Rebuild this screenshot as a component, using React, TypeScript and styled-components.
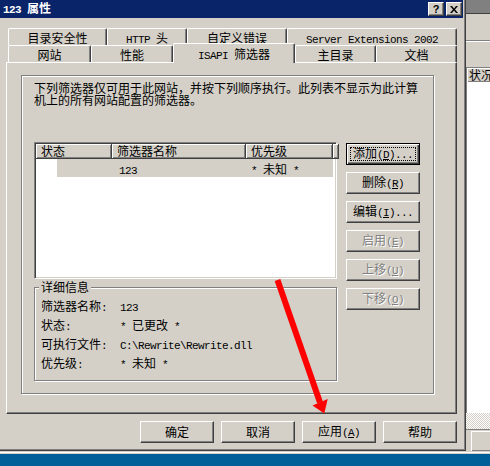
import React from 'react';
import styled, { createGlobalStyle, css } from 'styled-components';

const FACE = '#d4d0c8';
const SHADOW = '#808080';
const DARK = '#404040';

const GlobalStyle = createGlobalStyle`
  html, body {
    margin: 0;
    padding: 0;
    background: ${FACE};
  }
  body {
    font-family: "Noto Sans CJK SC", "Liberation Sans", sans-serif;
    font-size: 12px;
    color: #000;
  }
  * { box-sizing: border-box; }
`;

// latin runs: SimSun draws them 6px wide, mono
const Lat = styled.span`
  font-family: "Liberation Mono", monospace;
  font-size: 11px;
  letter-spacing: -0.6px;
  white-space: pre;
`;

const CJK = /([\u2e80-\u9fff\u3000-\u303f\uff00-\uffef]+)/;

const mix = (text: string) => (
  <span>
    {text
      .split(CJK)
      .filter(Boolean)
      .map((part, i) => (CJK.test(part) ? <span key={i}>{part}</span> : <Lat key={i}>{part}</Lat>))}
  </span>
);

const Screen = styled.div`
  position: relative;
  width: 490px;
  height: 466px;
  overflow: hidden;
  display: flex;
  flex-direction: column;
`;

const Desktop = styled.div`
  display: flex;
  height: 451px;
`;

const Dialog = styled.div`
  width: 469px;
  height: 451px;
  display: flex;
  flex-direction: column;
  background: ${FACE};
  padding-right: 2px;
  border-right: 1px solid ${DARK};
  border-bottom: 1px solid ${DARK};
  box-shadow: inset -1px -1px ${SHADOW};
`;

const TitleBar = styled.div`
  height: 18px;
  flex: none;
  display: flex;
  align-items: center;
  padding: 0 1px 0 3px;
  background: #0a246a;
  color: #fff;
  font-weight: bold;
`;

const TitleText = styled.div`
  flex: 1;
  line-height: 18px;
`;

const CapButtons = styled.div`
  display: flex;
  gap: 2px;
`;

const CapButton = styled.div`
  width: 16px;
  height: 14px;
  display: flex;
  align-items: center;
  justify-content: center;
  background: ${FACE};
  border: 1px solid;
  border-color: #fff ${DARK} ${DARK} #fff;
  box-shadow: inset -1px -1px ${SHADOW};
  color: #000;
  font-family: "Liberation Sans", sans-serif;
  font-size: 11px;
  font-weight: bold;
  line-height: 12px;
`;

const Body = styled.div`
  padding: 10px 6px 0 6px;
  display: flex;
  flex-direction: column;
`;

const TabRows = styled.div`
  padding-left: 2px;
  display: flex;
  flex-direction: column;
`;

const TabRow = styled.div`
  display: flex;
  height: 17px;
  align-items: flex-end;
`;

const Tab = styled.div<{ $w: number; $active?: boolean }>`
  width: ${p => p.$w}px;
  height: 17px;
  flex: none;
  display: flex;
  align-items: center;
  justify-content: center;
  padding-top: 1px;
  background: ${FACE};
  border-top: 1px solid #fff;
  border-left: 1px solid #fff;
  border-right: 1px solid ${DARK};
  border-top-left-radius: 2px;
  border-top-right-radius: 2px;
  box-shadow: inset -1px 0 ${SHADOW};
  white-space: nowrap;
  ${p =>
    p.$active &&
    css`
      height: 20px;
      margin-bottom: -1px;
      position: relative;
      z-index: 1;
      padding-top: 0;
    `}
`;

const Panel = styled.div`
  height: 352px;
  background: ${FACE};
  border-top: 1px solid #fff;
  border-left: 1px solid #fff;
  border-right: 1px solid ${DARK};
  border-bottom: 1px solid ${DARK};
  box-shadow: inset -1px -1px ${SHADOW};
  padding: 12px 0 0 14px;
`;

const Frame = styled.div`
  width: 413px;
  height: 319px;
  border: 1px solid ${SHADOW};
  box-shadow: inset 1px 1px #fff, 1px 1px #fff;
  padding: 6px 0 0 12px;
`;

const Description = styled.div`
  width: 390px;
  line-height: 12px;
`;

const Main = styled.div`
  margin-top: 36px;
  display: flex;
  gap: 9px;
`;

const LeftCol = styled.div`
  width: 303px;
  display: flex;
  flex-direction: column;
`;

const ListView = styled.div`
  height: 137px;
  background: #fff;
  border: 1px solid;
  border-color: ${SHADOW} #fff #fff ${SHADOW};
  box-shadow: inset 1px 1px ${DARK}, inset -1px -1px ${FACE};
  padding: 1px;
`;

const HeaderRow = styled.div`
  display: flex;
  height: 15px;
`;

const HeaderCell = styled.div<{ $w?: number }>`
  ${p => (p.$w ? `width: ${p.$w}px; flex: none;` : 'flex: 1;')}
  height: 15px;
  padding-left: 5px;
  line-height: 14px;
  background: ${FACE};
  border-right: 1px solid ${DARK};
  border-bottom: 1px solid ${DARK};
  box-shadow: inset 1px 1px #fff, inset -1px -1px ${SHADOW};
  white-space: nowrap;
`;

const ItemRow = styled.div`
  display: flex;
  height: 18px;
`;

const ItemIcon = styled.div`
  width: 21px;
  flex: none;
`;

const ItemSelection = styled.div`
  display: flex;
  background: ${FACE};
`;

const ItemCell = styled.div<{ $w: number; $pad?: number }>`
  width: ${p => p.$w}px;
  padding-left: ${p => p.$pad ?? 0}px;
  line-height: 16px;
  padding-top: 2px;
  white-space: nowrap;
`;

const Group = styled.div`
  margin-top: 8px;
  height: 94px;
  border: 1px solid ${SHADOW};
  box-shadow: inset 1px 1px #fff, 1px 1px #fff;
  padding-left: 6px;
`;

const Legend = styled.div`
  width: fit-content;
  margin: -7px 0 0 -2px;
  padding: 0 2px;
  background: ${FACE};
  line-height: 12px;
`;

const Details = styled.div`
  margin-top: 3px;
  display: grid;
  grid-template-columns: 79px auto;
  grid-auto-rows: 19px;
  align-items: center;
  white-space: nowrap;
`;

const ButtonCol = styled.div`
  margin-top: 1px;
  display: flex;
  flex-direction: column;
  gap: 7px;
`;

const Btn = styled.div<{ $default?: boolean; $disabled?: boolean }>`
  width: 74px;
  height: 22px;
  flex: none;
  display: flex;
  align-items: center;
  justify-content: center;
  background: ${FACE};
  border: 1px solid;
  border-color: #fff ${DARK} ${DARK} #fff;
  box-shadow: inset -1px -1px ${SHADOW};
  line-height: 18px;
  white-space: nowrap;
  ${p =>
    p.$default &&
    css`
      border-color: #000;
      box-shadow: inset 1px 1px #fff, inset -1px -1px ${DARK}, inset -2px -2px ${SHADOW};
      outline: 1px dotted #000;
      outline-offset: -5px;
    `}
  ${p =>
    p.$disabled &&
    css`
      color: ${SHADOW};
      text-shadow: 1px 1px 0 #fff;
    `}
`;

const Footer = styled.div`
  margin-top: 7px;
  display: flex;
  justify-content: flex-end;
  gap: 7px;
`;

const BackWin = styled.div`
  flex: 1;
  display: flex;
  flex-direction: column;
  background: ${FACE};
`;

const BackCaption = styled.div`
  height: 14px;
  background: ${SHADOW};
  border-bottom: 1px solid ${DARK};
`;

const BackToolbar = styled.div`
  height: 28px;
  border-bottom: 1px solid #fff;
  box-shadow: inset 0 -1px ${SHADOW};
`;

const BackPane = styled.div`
  flex: 1;
  margin-top: 25px;
  display: flex;
  flex-direction: column;
  background: #fff;
  border-top: 1px solid ${SHADOW};
  border-left: 1px solid ${SHADOW};
`;

const BackHeader = styled.div`
  height: 14px;
  padding-left: 2px;
  line-height: 13px;
  background: ${FACE};
  box-shadow: inset 1px 1px #fff, inset 0 -1px ${SHADOW};
  white-space: nowrap;
  overflow: hidden;
`;

const Dither = styled.div`
  height: 16px;
  background: repeating-conic-gradient(${FACE} 0 25%, #fff 0 50%) 0 0 / 2px 2px;
`;

const BackBottom = styled.div`
  height: 22px;
  border-top: 1px solid ${SHADOW};
  padding: 1px 0 0 5px;
`;

const BackBtn = styled.div`
  height: 20px;
  border-top: 1px solid #fff;
  border-left: 1px solid #fff;
  box-shadow: inset 0 -1px ${SHADOW};
`;

const Taskbar = styled.div`
  flex: 1;
  background: #005e98;
  border-top: 1px solid ${FACE};
  box-shadow: inset 0 1px #fff, inset 0 2px ${FACE};
`;

const Overlay = styled.svg`
  position: absolute;
  left: 0;
  top: 0;
  pointer-events: none;
`;

const row1 = [
  { label: '目录安全性', w: 99 },
  { label: 'HTTP 头', w: 80 },
  { label: '自定义错误', w: 100 },
  { label: 'Server Extensions 2002', w: 170 },
];

const row2 = [
  { label: '网站', w: 83 },
  { label: '性能', w: 82 },
  { label: 'ISAPI 筛选器', w: 122, active: true },
  { label: '主目录', w: 81 },
  { label: '文档', w: 81 },
];

const sideButtons = [
  { text: '添加', key: 'D', tail: '...', def: true },
  { text: '删除', key: 'R' },
  { text: '编辑', key: 'I', tail: '...' },
  { text: '启用', key: 'E', off: true },
  { text: '上移', key: 'U', off: true },
  { text: '下移', key: 'O', off: true },
];

const details = [
  ['筛选器名称:', '123'],
  ['状态:', '* 已更改 *'],
  ['可执行文件:', 'C:\\Rewrite\\Rewrite.dll'],
  ['优先级:', '* 未知 *'],
];

const Label = ({ text, hot, tail }: { text: string; hot?: string; tail?: string }) => (
  <span>
    {text}
    {hot && (
      <Lat>
        (<u>{hot}</u>){tail}
      </Lat>
    )}
  </span>
);

export default function App() {
  return (
    <>
      <GlobalStyle />
      <Screen>
        <Desktop>
          <Dialog>
            <TitleBar>
              <TitleText>{mix('123 属性')}</TitleText>
              <CapButtons>
                <CapButton>?</CapButton>
                <CapButton>
                  <svg width="8" height="7" viewBox="0 0 8 7">
                    <path d="M0 0h2l2 2.4 2-2.4h2l-3 3.5 3 3.5h-2l-2-2.4-2 2.4h-2l3-3.5z" fill="#000" />
                  </svg>
                </CapButton>
              </CapButtons>
            </TitleBar>
            <Body>
              <TabRows>
                <TabRow>
                  {row1.map(t => (
                    <Tab key={t.label} $w={t.w}>
                      {mix(t.label)}
                    </Tab>
                  ))}
                </TabRow>
                <TabRow>
                  {row2.map(t => (
                    <Tab key={t.label} $w={t.w} $active={t.active}>
                      {mix(t.label)}
                    </Tab>
                  ))}
                </TabRow>
              </TabRows>
              <Panel>
                <Frame>
                  <Description>
                    下列筛选器仅可用于此网站，并按下列顺序执行。此列表不显示为此计算机上的所有网站配置的筛选器。
                  </Description>
                  <Main>
                    <LeftCol>
                      <ListView>
                        <HeaderRow>
                          <HeaderCell $w={76}>状态</HeaderCell>
                          <HeaderCell $w={134}>筛选器名称</HeaderCell>
                          <HeaderCell $w={87}>优先级</HeaderCell>
                          <HeaderCell />
                        </HeaderRow>
                        <ItemRow>
                          <ItemIcon />
                          <ItemSelection>
                            <ItemCell $w={55} />
                            <ItemCell $w={134} $pad={7}>
                              {mix('123')}
                            </ItemCell>
                            <ItemCell $w={87} $pad={5}>
                              {mix('* 未知 *')}
                            </ItemCell>
                          </ItemSelection>
                        </ItemRow>
                      </ListView>
                      <Group>
                        <Legend>详细信息</Legend>
                        <Details>
                          {details.map(([k, v]) => (
                            <React.Fragment key={k}>
                              <div>{mix(k)}</div>
                              <div>{mix(v)}</div>
                            </React.Fragment>
                          ))}
                        </Details>
                      </Group>
                    </LeftCol>
                    <ButtonCol>
                      {sideButtons.map(b => (
                        <Btn key={b.key} $default={b.def} $disabled={b.off}>
                          <Label text={b.text} hot={b.key} tail={b.tail} />
                        </Btn>
                      ))}
                    </ButtonCol>
                  </Main>
                </Frame>
              </Panel>
              <Footer>
                <Btn>确定</Btn>
                <Btn>取消</Btn>
                <Btn>
                  <Label text="应用" hot="A" />
                </Btn>
                <Btn>帮助</Btn>
              </Footer>
            </Body>
          </Dialog>
          <BackWin>
            <BackCaption />
            <BackToolbar />
            <BackPane>
              <BackHeader>状况</BackHeader>
            </BackPane>
            <Dither />
            <BackBottom>
              <BackBtn />
            </BackBottom>
          </BackWin>
        </Desktop>
        <Taskbar />
        <Overlay width={490} height={466} viewBox="0 0 490 466">
          <line x1={277.5} y1={280} x2={320} y2={402.5} stroke="#ff0000" strokeWidth={6} />
          <polygon points="324.3,413.5 312.5,405.5 327.7,399" fill="#ff0000" />
        </Overlay>
      </Screen>
    </>
  );
}
